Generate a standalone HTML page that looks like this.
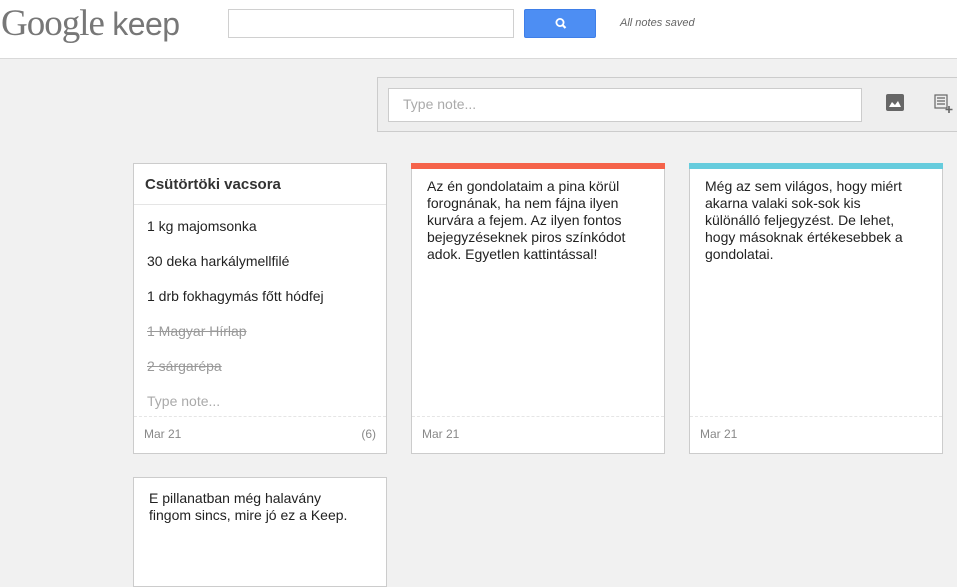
<!DOCTYPE html>
<html><head><style>
*{margin:0;padding:0;box-sizing:border-box}
body{width:957px;height:569px;overflow:hidden;background:#f1f1f1;font-family:"Liberation Sans",Arial,sans-serif;position:relative}
.hdr{position:absolute;left:0;top:0;width:957px;height:59px;background:#fff;border-bottom:1px solid #d9d9d9}
.logo{position:absolute;left:1px;top:2px;font-family:"Liberation Serif",serif;font-size:37px;color:#777;letter-spacing:-1px;white-space:nowrap}
.logo span{font-family:"Liberation Sans",sans-serif;font-size:32px;letter-spacing:-0.5px;font-weight:normal}
.search{position:absolute;left:228px;top:9px;width:286px;height:29px;border:1px solid #d0d0d0;background:#fff}
.btn{position:absolute;left:524px;top:9px;width:72px;height:29px;background:#4d8ef3;border:1px solid #3f7fe8;border-radius:2px}
.saved{position:absolute;left:620px;top:17px;font-size:11px;font-style:italic;color:#666}
.comp{position:absolute;left:377px;top:77px;width:600px;height:55px;border:1px solid #ccc;background:#eee}
.cin{position:absolute;left:388px;top:88px;width:474px;height:34px;border:1px solid #ccc;background:#fff;font-size:14px;color:#aaa;padding:7px 14px}
.card{position:absolute;background:#fff;border:1px solid #ccc;font-size:14px;color:#222}
.t{font-size:15px;font-weight:bold;color:#333;padding:12px 11px 0;height:41px;border-bottom:1px solid #e5e5e5}
.it{position:absolute;left:13px;font-size:14px}
.done{color:#999;text-decoration:line-through}
.foot{position:absolute;left:0;right:0;bottom:0;height:37px;border-top:1px dashed #e5e5e5;font-size:12px;color:#888;padding:10px 10px}
.txt{padding:9px 0 0 15px;width:228px;line-height:17px}
.bar{height:6px;margin:-1px -1px 0}
</style></head><body>
<div class="hdr">
<div class="logo">Google <span>keep</span></div>
<div class="search"></div>
<div class="btn"><svg width="72" height="29" viewBox="0 0 72 29"><circle cx="35" cy="12.5" r="3.6" fill="none" stroke="#fff" stroke-width="1.8"/><path d="M37.5 15 L40.5 18" stroke="#fff" stroke-width="2.2"/></svg></div>
<div class="saved">All notes saved</div>
</div>
<div class="comp"></div>
<div class="cin">Type note...</div>
<svg style="position:absolute;left:886px;top:94px" width="18" height="17"><rect width="18" height="17" rx="2" fill="#666"/><path d="M3 13 L6 8 L9 11 L12 7 L15 13Z" fill="#fff"/></svg>
<svg style="position:absolute;left:934px;top:94px" width="20" height="20" fill="none" stroke="#666" stroke-width="1.2"><rect x="1" y="1" width="12" height="13"/><path d="M3 4h8M3 7h8M3 10h8"/><path d="M15 12v7M11.5 15.5h7" stroke-width="1.6"/></svg>

<div class="card" style="left:133px;top:163px;width:254px;height:291px">
<div class="t">Csütörtöki vacsora</div>
<div class="it" style="top:54px">1 kg majomsonka</div>
<div class="it" style="top:89px">30 deka harkálymellfilé</div>
<div class="it" style="top:124px">1 drb fokhagymás főtt hódfej</div>
<div class="it done" style="top:159px">1 Magyar Hírlap</div>
<div class="it done" style="top:194px">2 sárgarépa</div>
<div class="it" style="top:229px;color:#aaa">Type note...</div>
<div class="foot">Mar 21<span style="float:right">(6)</span></div>
</div>

<div class="card" style="left:411px;top:163px;width:254px;height:291px">
<div class="bar" style="background:#f5634a"></div>
<div class="txt">Az én gondolataim a pina körül forognának, ha nem fájna ilyen kurvára a fejem. Az ilyen fontos bejegyzéseknek piros színkódot adok. Egyetlen kattintással!</div>
<div class="foot">Mar 21</div>
</div>

<div class="card" style="left:689px;top:163px;width:254px;height:291px">
<div class="bar" style="background:#66ccdd"></div>
<div class="txt">Még az sem világos, hogy miért akarna valaki sok-sok kis különálló feljegyzést. De lehet, hogy másoknak értékesebbek a gondolatai.</div>
<div class="foot">Mar 21</div>
</div>

<div class="card" style="left:133px;top:477px;width:254px;height:110px">
<div class="txt" style="padding-top:12px">E pillanatban még halavány<br>fingom sincs, mire jó ez a Keep.</div>
</div>
</body></html>
